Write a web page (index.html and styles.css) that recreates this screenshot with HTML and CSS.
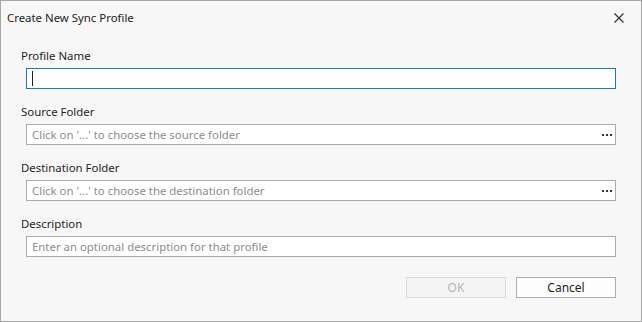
FILE: index.html
```html
<!DOCTYPE html>
<html lang="en">
<head>
    <meta charset="UTF-8">
    <title>Create New Sync Profile</title>
    <link rel="stylesheet" href="styles.css">
</head>
<body>
    <div class="window">
        <!-- Заголовок окна -->
        <div class="title-bar">
            <span class="title">Create New Sync Profile</span>
            <span class="close" title="Close">
                <svg width="10" height="10" viewBox="0 0 10 10">
                    <path d="M0.5 0.5 L9.5 9.5 M9.5 0.5 L0.5 9.5" stroke="#333" stroke-width="1.2" fill="none"/>
                </svg>
            </span>
        </div>

        <div class="content">
            <div class="field">
                <div class="label">Profile Name</div>
                <div class="input focused"><span class="caret"></span></div>
            </div>

            <div class="field">
                <div class="label">Source Folder</div>
                <div class="input">
                    <span class="placeholder">Click on '...' to choose the source folder</span>
                    <span class="dots"><i></i><i></i><i></i></span>
                </div>
            </div>

            <div class="field">
                <div class="label">Destination Folder</div>
                <div class="input">
                    <span class="placeholder">Click on '...' to choose the destination folder</span>
                    <span class="dots"><i></i><i></i><i></i></span>
                </div>
            </div>

            <div class="field">
                <div class="label">Description</div>
                <div class="input">
                    <span class="placeholder">Enter an optional description for that profile</span>
                </div>
            </div>

            <div class="buttons">
                <button class="btn" disabled>OK</button>
                <button class="btn">Cancel</button>
            </div>
        </div>
    </div>
</body>
</html>
```

FILE: styles.css
```css
/* Общие стили */
body {
    margin: 0;
    padding: 0;
    font-family: 'Noto Sans', 'Open Sans', sans-serif;
    font-size: 11.4px;
    color: #1e1e1e;
    background-color: #f7f7f7;
}

.window {
    width: 642px;
    height: 322px;
    box-sizing: border-box;
    border: 1px solid #a6a6a6;
    background-color: #f7f7f7;
    display: flex;
    flex-direction: column;
}

.title-bar {
    height: 33px;
    display: flex;
    align-items: center;
    justify-content: space-between;
    padding: 0 17px 0 6px;
}

.title {
    color: #222;
}

.close {
    display: flex;
    width: 10px;
    height: 10px;
}

.content {
    padding: 13px 25px 0 25px;
}

.field {
    margin-bottom: 14px;
}

.label {
    margin-left: -5px;
    height: 16px;
    line-height: 18px;
    margin-bottom: 5px;
    color: #1e1e1e;
}

.input {
    height: 21px;
    box-sizing: border-box;
    border: 1px solid #ababab;
    background-color: #fff;
    display: flex;
    align-items: center;
    justify-content: space-between;
    padding: 0 3px 0 5px;
}

.input.focused {
    border-color: #1a78b4;
}

.caret {
    width: 1px;
    height: 15px;
    background-color: #1e1e1e;
}

.placeholder {
    color: #8c8c8c;
    white-space: nowrap;
}

.dots {
    display: flex;
    gap: 2px;
    align-items: center;
}

.dots i {
    width: 2px;
    height: 2px;
    background-color: #333;
}

.buttons {
    display: flex;
    justify-content: flex-end;
    gap: 10px;
    margin-top: 20px;
}

.btn {
    width: 100px;
    height: 21px;
    box-sizing: border-box;
    font-family: inherit;
    font-size: 12px;
    padding: 0;
    border: 1px solid #adadad;
    background-color: #fdfdfd;
    color: #1e1e1e;
}

.btn:disabled {
    border-color: #d9d9d9;
    background-color: #f4f4f4;
    color: #b3b3b3;
}
```
